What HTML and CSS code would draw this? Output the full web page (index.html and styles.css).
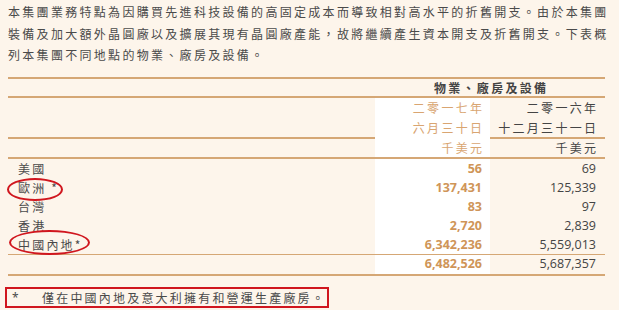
FILE: index.html
```html
<!DOCTYPE html>
<html lang="zh-Hant">
<head>
<meta charset="utf-8">
<link rel="stylesheet" href="styles.css">
</head>
<body>
<div class="page">
  <p class="intro">本集團業務特點為因購買先進科技設備的高固定成本而導致相對高水平的折舊開支。由於本集團裝備及加大額外晶圓廠以及擴展其現有晶圓廠產能，故將繼續產生資本開支及折舊開支。下表概列本集團不同地點的物業、廠房及設備。</p>

  <div class="tbl">
    <div class="row title-row">
      <div class="label"></div>
      <div class="span2"><span class="sp">物業、廠房及設備</span></div>
    </div>
    <div class="row hdr-row">
      <div class="label"></div>
      <div class="cur"><span class="sp">二零一七年</span><br><span class="sp">六月三十日</span></div>
      <div class="prev"><span class="sp">二零一六年</span><br><span class="sp">十二月三十一日</span></div>
    </div>
    <div class="row unit-row">
      <div class="label"></div>
      <div class="cur"><span class="sp">千美元</span></div>
      <div class="prev"><span class="sp">千美元</span></div>
    </div>
    <div class="body">
      <div class="row data">
        <div class="label"><span class="lab">美國</span></div>
        <div class="cur num">56</div>
        <div class="prev num">69</div>
      </div>
      <div class="row data">
        <div class="label"><span class="lab circled">歐洲 *<span class="ring ring-eu"></span></span></div>
        <div class="cur num">137,431</div>
        <div class="prev num">125,339</div>
      </div>
      <div class="row data">
        <div class="label"><span class="lab">台灣</span></div>
        <div class="cur num">83</div>
        <div class="prev num">97</div>
      </div>
      <div class="row data">
        <div class="label"><span class="lab">香港</span></div>
        <div class="cur num">2,720</div>
        <div class="prev num">2,839</div>
      </div>
      <div class="row data">
        <div class="label"><span class="lab circled">中國內地*<span class="ring ring-cn"></span></span></div>
        <div class="cur num">6,342,236</div>
        <div class="prev num">5,559,013</div>
      </div>
    </div>
    <div class="row total-row">
      <div class="label"></div>
      <div class="cur num">6,482,526</div>
      <div class="prev num">5,687,357</div>
    </div>
  </div>

  <div class="note">
    <span class="star">*</span><span class="note-text">僅在中國內地及意大利擁有和營運生產廠房。</span>
  </div>
</div>
</body>
</html>
```

FILE: styles.css
```css
html, body {
  margin: 0;
  padding: 0;
  background: #fdf5eb;
}

body {
  font-family: "Noto Sans CJK TC", "Noto Sans", sans-serif;
  color: #4a4a4a;
}

.page {
  padding: 1px 0 0 8px;
  width: 611px;
}

.intro {
  margin: 0;
  width: 603px;
  font-size: 12px;
  line-height: 21.5px;
  letter-spacing: 2.3px;
}

.tbl {
  margin-top: 11px;
  width: 597px;
  border-top: 2px solid #d5a775;
  border-bottom: 2px solid #d5a775;
}

.row {
  display: grid;
  grid-template-columns: 367px 115px 115px;
}

.title-row {
  height: 17px;
  border-bottom: 2px solid #d5a775;
}

.span2 {
  grid-column: 2 / 4;
  text-align: center;
  font-size: 12px;
  line-height: 17px;
  font-weight: 700;
  color: #444;
}

.sp {
  letter-spacing: 2.3px;
  margin-right: -2.3px;
}

.hdr-row {
  height: 39px;
  border-bottom: 2px solid #d5a775;
  font-size: 12px;
  line-height: 20.5px;
}

.unit-row {
  height: 18px;
  border-bottom: 2px solid #d5a775;
  font-size: 12px;
  line-height: 18px;
}

.cur {
  background: #ffffff;
  text-align: right;
  padding-right: 8px;
  color: #d9a571;
}

.prev {
  text-align: right;
  padding-right: 9px;
  color: #444;
}

.body {
  border-bottom: 1px solid #d5a775;
}

.data {
  height: 19.2px;
  line-height: 19.2px;
}

.total-row {
  height: 18.5px;
  line-height: 18.5px;
}

.label {
  padding-left: 10px;
  font-size: 12px;
}

.lab {
  letter-spacing: 2.2px;
  color: #4a4a4a;
}

.num {
  font-family: "Open Sans", "Noto Sans", sans-serif;
  font-size: 12.5px;
}

.cur.num {
  font-weight: 700;
  color: #cf9558;
}

.circled {
  position: relative;
}

.ring {
  position: absolute;
  border: 2px solid #d0161e;
  border-radius: 50%;
  box-sizing: border-box;
}

.ring-eu {
  left: -11px;
  top: -1px;
  width: 56px;
  height: 23px;
}

.ring-cn {
  left: -9px;
  top: -6px;
  width: 81px;
  height: 25px;
}

.note {
  margin-top: 11px;
  margin-left: -3px;
  width: 324px;
  height: 21px;
  box-sizing: border-box;
  border: 2px solid #d0161e;
  display: flex;
  align-items: center;
  font-size: 12px;
  line-height: 17px;
  color: #4a4a4a;
  white-space: nowrap;
}

.star {
  flex: 0 0 35px;
  padding-left: 5px;
  box-sizing: border-box;
  font-family: "Noto Sans", sans-serif;
}

.note-text {
  flex: 0 0 auto;
  letter-spacing: 2.2px;
}
```
